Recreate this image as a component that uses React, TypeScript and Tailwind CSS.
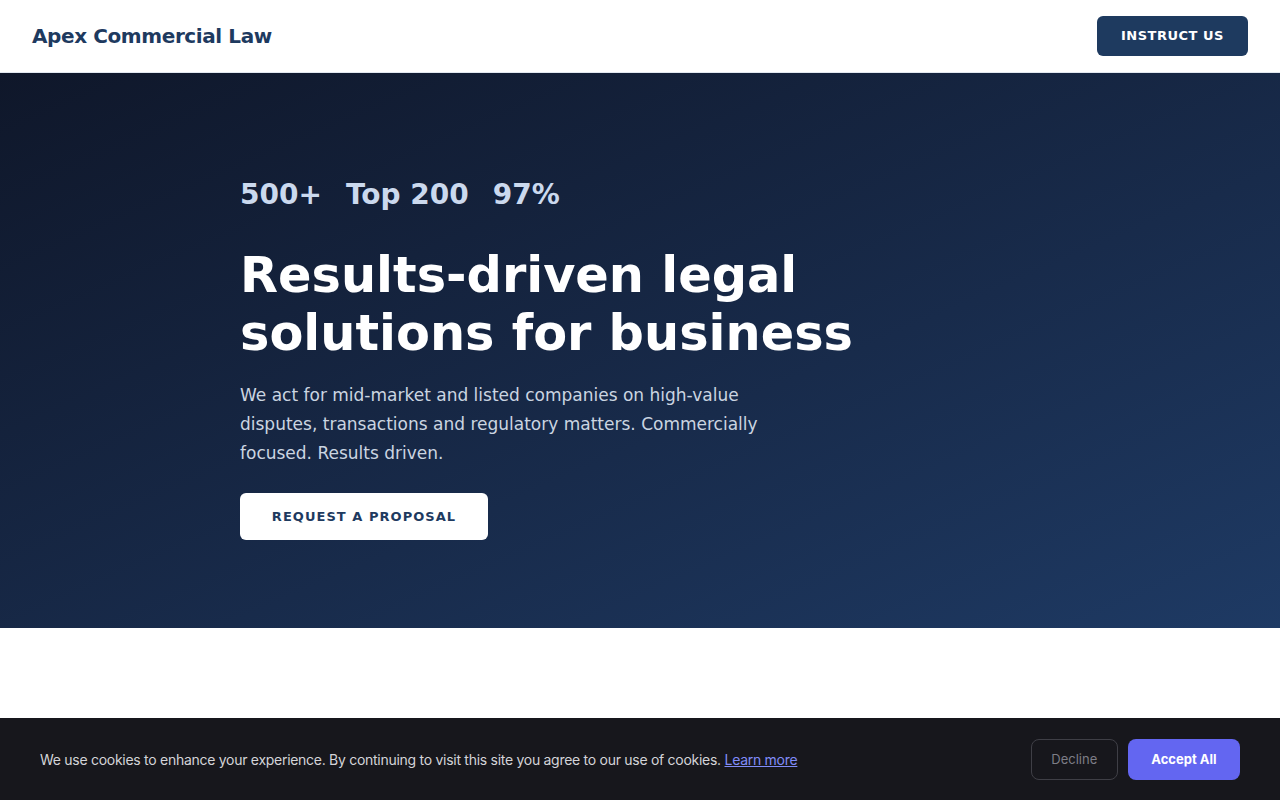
export default function App() {
  return (
    <div className="min-h-screen bg-white" style={{ fontFamily: '"DejaVu Sans", sans-serif' }}>
      <header className="flex h-[73px] items-center justify-between border-b border-slate-200 bg-white px-8">
        <div className="text-[20px] font-bold tracking-[-0.02em] text-[#1e3a5f]">Apex Commercial Law</div>
        <button
          type="button"
          className="h-10 rounded-md bg-[#1e3a5f] px-6 text-[13px] font-bold uppercase tracking-[0.04em] text-white"
        >
          Instruct us
        </button>
      </header>

      <section className="h-[555px] bg-gradient-to-br from-[#0f172a] to-[#1e3a64] pl-[240px] pt-[104px]">
        <div className="flex gap-6 text-[28px] font-bold leading-[36px] text-[#cbd9ee]">
          <span>500+</span>
          <span>Top 200</span>
          <span>97%</span>
        </div>
        <h1 className="mt-[33px] text-[49.4px] font-bold leading-[58px] text-white">
          Results-driven legal
          <br />
          solutions for business
        </h1>
        <p className="mt-[19px] max-w-[540px] text-[17px] leading-[29px] text-[#cbd5e1]">
          We act for mid-market and listed companies on high-value disputes, transactions and
          regulatory matters. Commercially focused. Results driven.
        </p>
        <button
          type="button"
          className="mt-[25px] h-[47px] w-[248px] rounded-md bg-white text-[13px] font-bold uppercase tracking-[0.08em] text-[#1e3a5f]"
        >
          Request a proposal
        </button>
      </section>

      <div className="h-[90px] bg-white" />

      <div
        className="fixed inset-x-0 bottom-0 flex h-[82px] items-center justify-between bg-[#17171c] px-10"
        style={{ fontFamily: 'Inter, "Noto Sans", sans-serif' }}
      >
        <p className="text-[14px] tracking-[-0.02em] text-[#d4d4d8]">
          We use cookies to enhance your experience. By continuing to visit this site you agree to our
          use of cookies.{" "}
          <a href="#" className="text-[#818cf8] underline">
            Learn more
          </a>
        </p>
        <div className="flex gap-2.5">
          <button
            type="button"
            className="h-[41px] rounded-lg border border-[#3f3f46] px-[19.5px] pt-px text-[13px] text-[#7d7d86]"
          >
            Decline
          </button>
          <button
            type="button"
            className="h-[41px] rounded-lg bg-[#6366f1] px-[23.5px] pt-px text-[13px] font-bold text-white"
          >
            Accept All
          </button>
        </div>
      </div>
    </div>
  );
}
